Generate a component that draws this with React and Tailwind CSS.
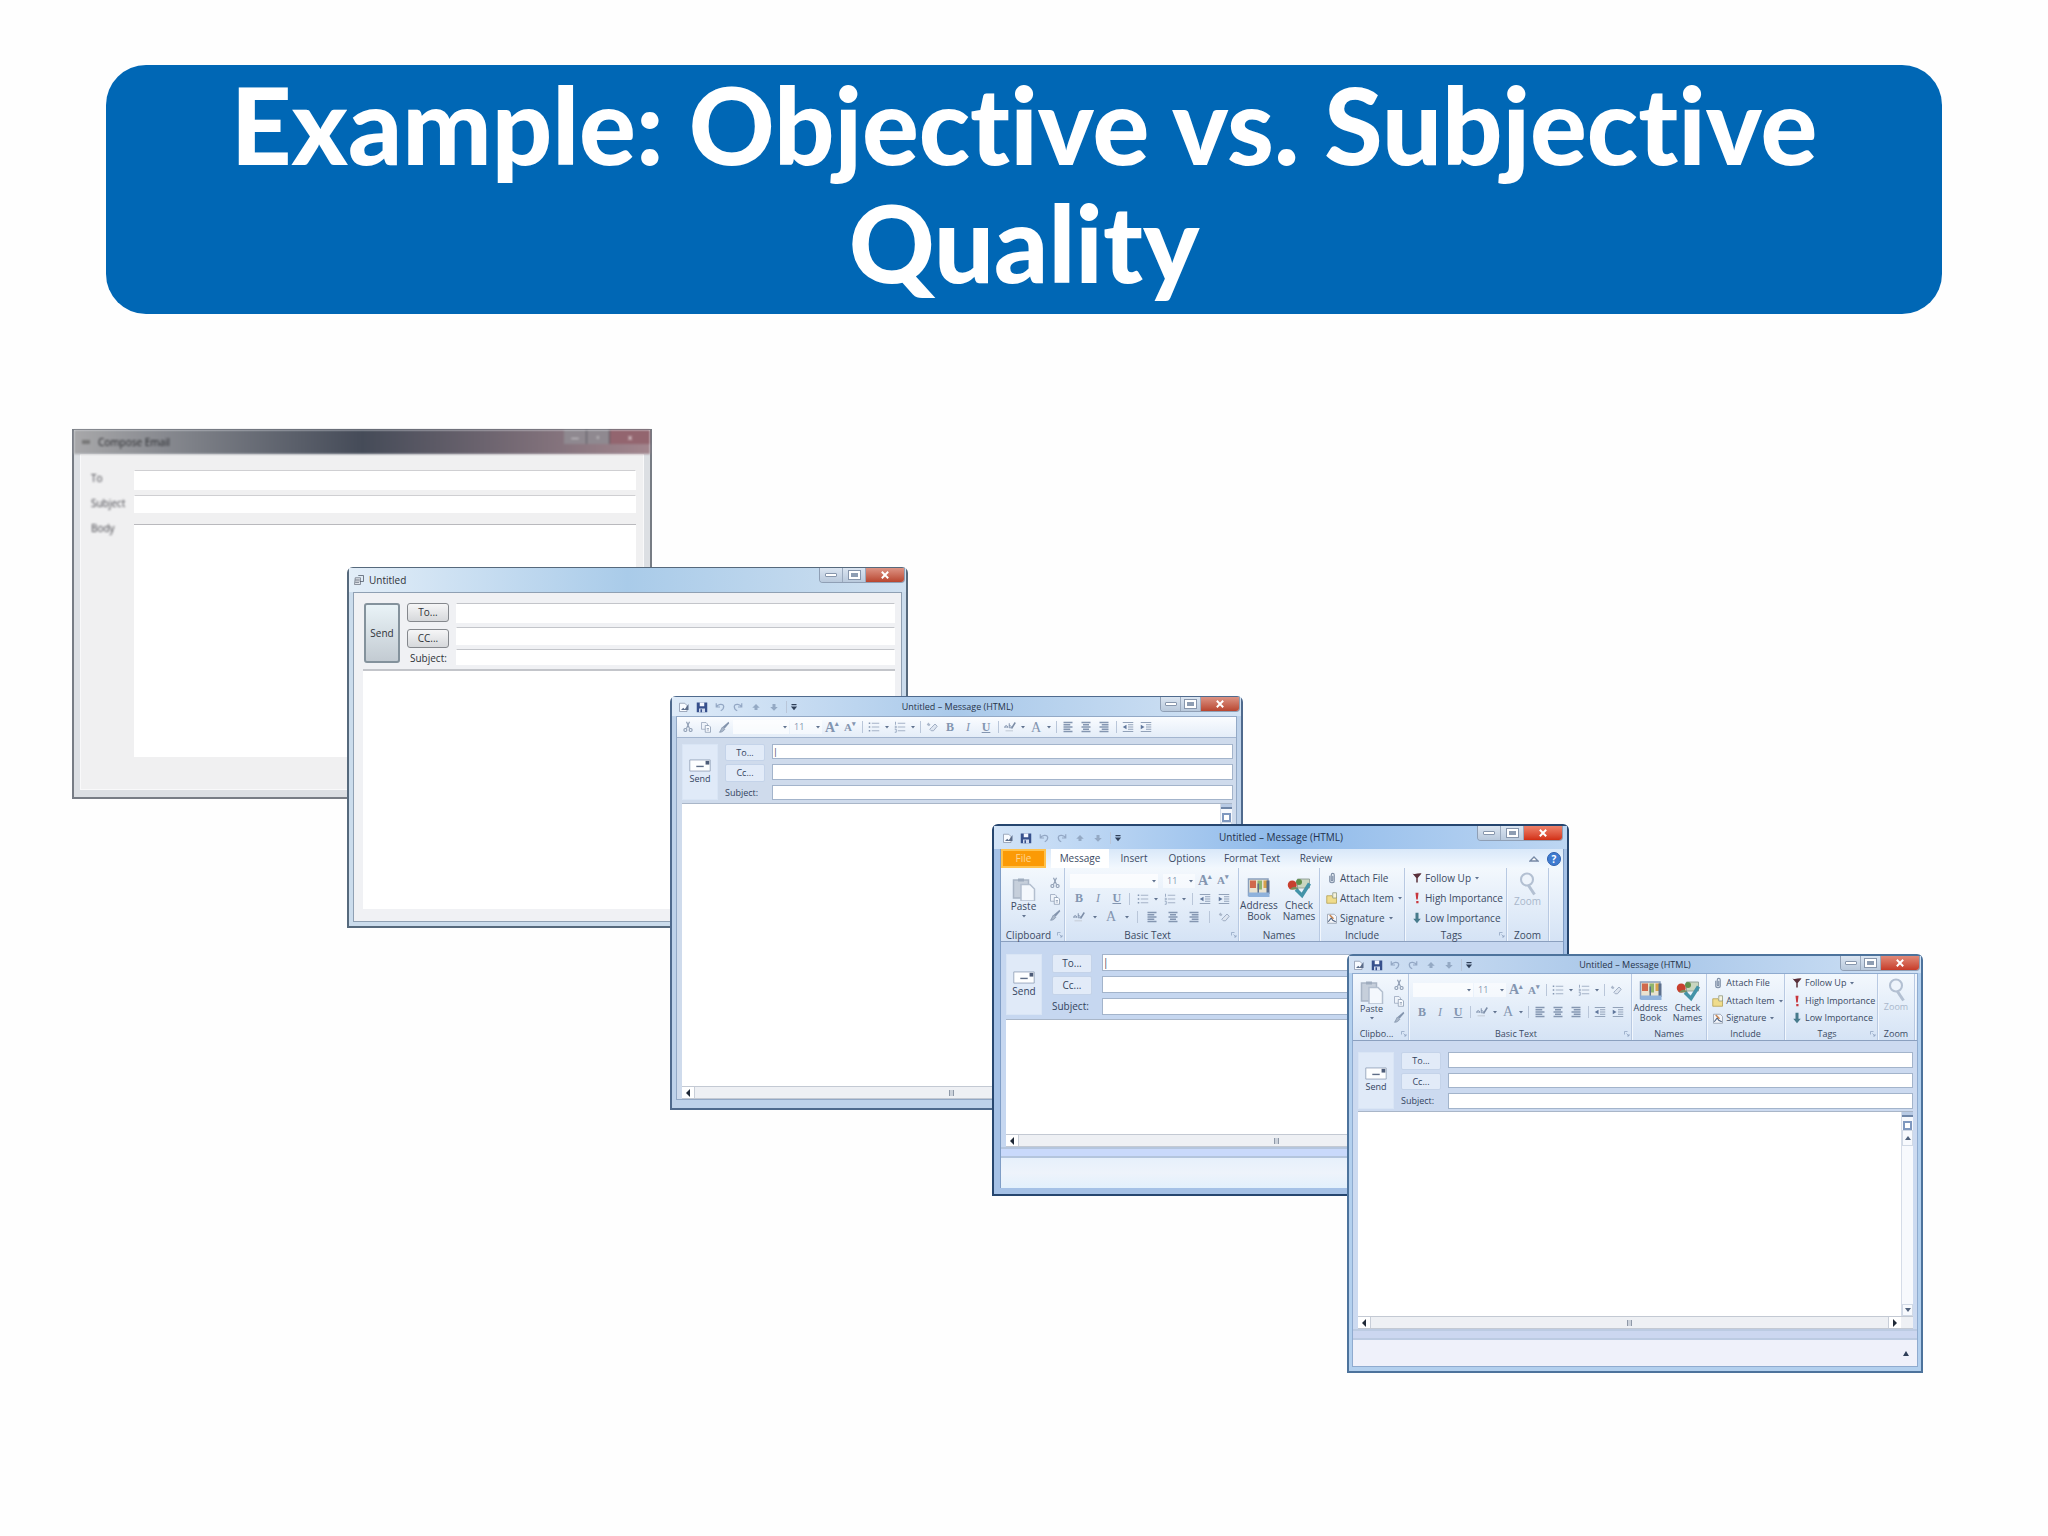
import React from 'react'
import clsx from 'clsx'

// Small drawings used on the title bars and toolbars, all on a 16x16 grid
const glyphs = {
  mail: (
    <>
      <path d="M2 3h7l3 3v8H2z" fill="#f8fbff" stroke="#8592a8" />
      <path d="M4 12l3-3 2 2 5-7v8z" fill="#5c6d8a" />
    </>
  ),
  form: (
    <>
      <path d="M3 5h7v9H2z" fill="#dfe3ea" stroke="#6c7480" />
      <path d="M7 2h7v8H9M3 8h6M3 11h5" fill="none" stroke="#4c5664" />
    </>
  ),
  save: (
    <>
      <path d="M1 2h14v13H1z" fill="#37508c" />
      <path d="M5 2h6v5H5z" fill="#f4f7ff" />
      <path d="M4 10h8v5H4z" fill="#cfd9ee" />
      <path d="M6 11h2v4H6z" fill="#37508c" />
    </>
  ),
  undo: <path d="M3 3v5h5M3 8c2-4 9-5 10-1 0 3-2 5-4 6" fill="none" stroke="#93a7c4" strokeWidth="1.6" />,
  redo: <path d="M13 3v5H8M13 8C11 4 4 3 3 7c0 3 1 5 4 6" fill="none" stroke="#93a7c4" strokeWidth="1.6" />,
  up: <path d="M8 4l5 5h-3v3H6V9H3z" fill="#94a9c4" />,
  down: <path d="M8 13l5-5h-3V4H6v4H3z" fill="#94a9c4" />,
  more: <path d="M4 3h8v2H4zM3 7h10l-5 6z" fill="#2f3f58" />,
  cut: (
    <>
      <path d="M6 1l4 9M10 1L6 10" stroke="#8d9cb2" strokeWidth="1.5" />
      <circle cx="4.500" cy="12" r="2" fill="none" stroke="#8d9cb2" strokeWidth="1.5" />
      <circle cx="11.500" cy="12" r="2" fill="none" stroke="#8d9cb2" strokeWidth="1.5" />
    </>
  ),
  copy: (
    <>
      <path d="M2 2h6l2 2v7H2z" fill="#eef3fa" stroke="#94a2b8" />
      <path d="M7 6h5l2 2v7H7z" fill="#f8fbff" stroke="#8695ac" />
      <path d="M9 10h3M9 12h3" stroke="#8695ac" />
    </>
  ),
  brush: (
    <>
      <path d="M14 1l1 2-6 7-3-2z" fill="#8394ad" />
      <path d="M6 8l3 3c-2 3-4 4-7 4 2-2 2-5 4-7z" fill="#a9b6c8" stroke="#7f90a8" />
    </>
  ),
  bullets: (
    <>
      <path d="M1 2h2v2H1zM1 7h2v2H1zM1 12h2v2H1z" fill="#8496b1" />
      <path d="M5 3h10M5 8h10M5 13h10" stroke="#a5b3c8" strokeWidth="1.5" />
    </>
  ),
  numbers: (
    <>
      <path d="M2 1v4M1 7h2v2H1M1 11h2v4H1" fill="none" stroke="#8496b1" />
      <path d="M5 3h10M5 8h10M5 13h10" stroke="#a5b3c8" strokeWidth="1.5" />
    </>
  ),
  outdent: (
    <>
      <path d="M1 2h14M8 5h7M8 8h7M8 11h7M1 14h14" stroke="#8f9fb7" strokeWidth="1.3" />
      <path d="M6 5v6L1 8z" fill="#60779c" />
    </>
  ),
  indent: (
    <>
      <path d="M1 2h14M8 5h7M8 8h7M8 11h7M1 14h14" stroke="#8f9fb7" strokeWidth="1.3" />
      <path d="M1 5v6l5-3z" fill="#60779c" />
    </>
  ),
  left: <path d="M2 2h12M2 5h9M2 8h12M2 11h9M2 14h12" stroke="#8496b1" strokeWidth="1.8" />,
  center: <path d="M2 2h12M4 5h8M2 8h12M4 11h8M2 14h12" stroke="#8496b1" strokeWidth="1.8" />,
  right: <path d="M2 2h12M5 5h9M2 8h12M5 11h9M2 14h12" stroke="#8496b1" strokeWidth="1.8" />,
  eraser: (
    <>
      <path d="M1 5l2-3 3 3-2 2z" fill="#aab7ca" />
      <path d="M7 9l5-5 3 3-5 6H7l-2-2z" fill="#dde5f0" stroke="#8b9bb4" />
    </>
  ),
  highlight: (
    <>
      <path d="M1 9c0-4 4-4 4 0M1 8h4M7 3v6c3 1 4-3 0-3" fill="none" stroke="#8293ad" strokeWidth="1.3" />
      <path d="M15 2l-5 8" stroke="#7b8ca6" strokeWidth="2" />
      <path d="M2 13h10" stroke="#cdd5e0" strokeWidth="2" />
    </>
  ),
  paste: (
    <>
      <path d="M1 2h10v12H1z" fill="#c6cfdb" stroke="#a9b5c5" />
      <path d="M4 1h4v2H4z" fill="#9facbe" />
      <path d="M6 5h6l3 3v8H6z" fill="#f4f8fd" stroke="#b3bfcf" />
    </>
  ),
  book: (
    <>
      <path d="M1 2h13v11H1z" fill="#e9e2cf" stroke="#8aa0bd" />
      <path d="M2 3h4v5H2z" fill="#d0694c" />
      <path d="M7 3h3v6H7z" fill="#8fb56c" />
      <path d="M11 3h3v5h-3z" fill="#d8a24a" />
      <path d="M7 5h1v7H7zM13 3h2v9h-2z" fill="#5c6f8c" />
      <path d="M1 11h14v3H1z" fill="#8fb2dc" />
    </>
  ),
  check: (
    <>
      <path d="M7 2h8v6H7z" fill="#c9d6c0" stroke="#8d9c94" strokeWidth=".6" />
      <circle cx="3.500" cy="6" r="3" fill="#c8402f" />
      <circle cx="8" cy="4" r="2" fill="#5f8f4d" />
      <path d="M2 9c2-3 5-2 6 0z" fill="#7a8d5c" />
      <path d="M6 9l4 4 5-8" fill="none" stroke="#4393a8" strokeWidth="2.4" />
    </>
  ),
  clip: <path d="M5 5v7c0 3 6 3 6 0V4c0-3-4-3-4 0v7c0 1 2 1 2 0V5" fill="none" stroke="#7e8ea5" strokeWidth="1.5" />,
  item: (
    <>
      <path d="M1 5h7l2 2h4v8H1z" fill="#efdc8c" stroke="#b29c4b" />
      <path d="M9 1h5v7H9z" fill="#f6f3dd" stroke="#8c9479" />
    </>
  ),
  sign: (
    <>
      <path d="M2 3h9l3 3v9H2z" fill="#f4f6fa" stroke="#8d98a8" />
      <path d="M3 13l4-5 2 3 4 2" fill="none" stroke="#4e6384" strokeWidth="1.5" />
      <path d="M5 4l5 5" stroke="#c98550" strokeWidth="2" />
    </>
  ),
  flag: <path d="M2 2c4 2 8-1 12 0L9 8v6H7V8z" fill="#59303a" />,
  high: <path d="M6 1h4L9 10H7zM7 12h3v3H7z" fill="#c8373d" />,
  low: <path d="M6 1h4v8h3l-5 6-5-6h3z" fill="#477b8c" />,
  zoom: (
    <>
      <circle cx="8" cy="5" r="4" fill="#eef4fb" stroke="#b3c0d2" strokeWidth="1.4" />
      <path d="M9 9l4 6" stroke="#b3c0d2" strokeWidth="2" />
    </>
  ),
  launch: <path d="M3 9V3h6M7 7l5 5M12 8v4H8" fill="none" stroke="#8ea2bf" strokeWidth="1.5" />,
  caret: <path d="M4 6h8l-4 5z" fill="#60728f" />,
}

const Icon = ({ name, className = 'size-3' }) => (
  <svg viewBox="0 0 16 16" className={clsx('shrink-0', className)} aria-hidden="true">
    {glyphs[name]}
  </svg>
)

const Tool = ({ name, label }) => (
  <button type="button" aria-label={label || name} className="flex h-4 w-[18px] shrink-0 items-center justify-center">
    <Icon name={name} />
  </button>
)

const Letter = ({ children, label, className }) => (
  <button
    type="button"
    aria-label={label}
    className={clsx('flex h-4 w-[18px] shrink-0 items-center justify-center font-["Liberation_Serif",serif] text-[#8395b0]', className)}
  >
    {children}
  </button>
)

const Caret = () => <Icon name="caret" className="size-2" />

const Rule = () => (
  <span className="flex w-[6px] shrink-0 justify-center">
    <span className="h-3 w-px bg-[#b9c6d9]" />
  </span>
)

const Grow = () => (
  <>
    <Letter label="Grow font" className="text-[14px] font-bold">A<sup className="text-[7px]">▴</sup></Letter>
    <Letter label="Shrink font" className="text-[11px] font-bold">A<sup className="text-[7px]">▾</sup></Letter>
  </>
)

const BoldItalic = () => (
  <>
    <Letter label="Bold" className="text-[12px] font-bold">B</Letter>
    <Letter label="Italic" className="text-[12px] italic">I</Letter>
    <Letter label="Underline" className="text-[12px] font-bold underline">U</Letter>
  </>
)

const Lists = () => (
  <>
    <Tool name="bullets" />
    <Caret />
    <Tool name="numbers" />
    <Caret />
  </>
)

const Colors = () => (
  <>
    <Tool name="highlight" />
    <Caret />
    <Letter label="Font color" className="text-[14px]">A</Letter>
    <Caret />
  </>
)

const Aligns = () => (
  <>
    <Tool name="left" label="Align left" />
    <Tool name="center" label="Center" />
    <Tool name="right" label="Align right" />
  </>
)

const Indents = () => (
  <>
    <Tool name="outdent" />
    <Tool name="indent" />
  </>
)

const FontPickers = ({ className }) => (
  <>
    <span className={clsx('flex h-[14px] shrink-0 items-center bg-white/70', className)}>
      <select aria-label="Font" className="h-full min-w-0 flex-1 appearance-none">
        <option></option>
      </select>
      <Caret />
    </span>
    <span className="mx-px flex h-[14px] w-8 shrink-0 items-center bg-white/50">
      <select aria-label="Font size" className="h-full min-w-0 flex-1 appearance-none pl-1 text-[9px] leading-[14px] text-[#8495ae]">
        <option>11</option>
      </select>
      <Caret />
    </span>
  </>
)

const Controls = ({ closeColor = 'from-[#dc9384] to-[#b8452f]', width = 'w-[86px]' }) => (
  <div className={clsx('flex h-[15px] shrink-0 self-start overflow-hidden rounded-b-[4px] border border-t-0 border-[#8f9fb5]', width)}>
    <button type="button" aria-label="Minimize" className="flex flex-1 items-center justify-center border-r border-[#9aa9bd] bg-linear-to-b from-[#dbe5f1] to-[#b9c9dc]">
      <span className="h-1 w-3 rounded-[1px] border border-[#8796ac] bg-white" />
    </button>
    <button type="button" aria-label="Maximize" className="flex flex-1 items-center justify-center border-r border-[#9aa9bd] bg-linear-to-b from-[#dbe5f1] to-[#b9c9dc]">
      <span className="h-2 w-[11px] border-2 border-white bg-[#8e9db2] outline outline-[#8796ac]" />
    </button>
    <button type="button" aria-label="Close" className={clsx('flex w-[38px] items-center justify-center bg-linear-to-b text-white', closeColor)}>
      <svg viewBox="0 0 10 10" className="size-2" aria-hidden="true">
        <path d="M1 1l8 8M9 1L1 9" stroke="currentColor" strokeWidth="2.4" />
      </svg>
    </button>
  </div>
)

const QuickAccess = () => (
  <div className="flex items-center">
    <Tool name="mail" />
    <Tool name="save" />
    <Tool name="undo" />
    <Tool name="redo" />
    <Tool name="up" label="Previous" />
    <Tool name="down" label="Next" />
    <Rule />
    <Icon name="more" className="size-[10px]" />
  </div>
)

const TitleBar = ({ title, className, ...controls }) => (
  <div className={clsx('flex shrink-0 items-center bg-linear-to-r', className)}>
    <div className="flex-1">
      <QuickAccess />
    </div>
    <h2>{title}</h2>
    <div className="flex flex-1 justify-end self-start">
      <Controls {...controls} />
    </div>
  </div>
)

const Field = ({ id, label, className, value = '' }) => (
  <input
    id={id}
    aria-label={label}
    defaultValue={value}
    className={clsx('block w-full border bg-white', className)}
  />
)

// Send button, recipient buttons and the three address lines
const Envelope = ({ id, cursor, className }) => (
  <div className={clsx('flex shrink-0 pl-[5px] text-[#33435e]', className)}>
    <button type="button" className="flex w-9 shrink-0 flex-col items-center justify-center border border-[#d9e5f5] bg-[#e0eaf8]">
      <svg viewBox="0 0 24 14" className="h-[13px] w-6" aria-hidden="true">
        <path d="M1 1h22v12H1z" fill="#fdfeff" stroke="#98a7bd" />
        <path d="M18 2h4v4h-4z" fill="#4d5c78" />
        <path d="M8 8h8" stroke="#5e6d87" strokeWidth="1.500" />
      </svg>
      Send
    </button>
    <div className="flex w-10 shrink-0 flex-col gap-[3px]">
      <button type="button" className="flex-1 rounded-xs border border-[#c4d3e9] bg-[#e2ebf8]">To...</button>
      <button type="button" className="flex-1 rounded-xs border border-[#c4d3e9] bg-[#e2ebf8]">Cc...</button>
      <label htmlFor={`${id}-subject`} className="flex flex-1 items-center">Subject:</label>
    </div>
    <div className="flex flex-1 flex-col gap-[5px]">
      <Field id={`${id}-to`} label="To" value={cursor ? '|' : ''} className="min-h-0 flex-1 border-[#a3b4cb]" />
      <Field id={`${id}-cc`} label="Cc" className="min-h-0 flex-1 border-[#a3b4cb]" />
      <Field id={`${id}-subject`} label="Subject" className="min-h-0 flex-1 border-[#a3b4cb]" />
    </div>
  </div>
)

const SideScroll = () => (
  <div className="flex w-3 shrink-0 flex-col items-center border-l border-[#d5dce8] bg-[#f7f9fd]">
    <span className="h-[5px] w-full border-b-2 border-[#6f86a8] bg-[#b8cae4]" />
    <span className="mt-1 size-[9px] border-2 border-[#7f98bf] bg-white" />
    <button type="button" aria-label="Scroll up" className="flex h-4 w-full items-center justify-center border border-[#d1d9e5]">
      <svg viewBox="0 0 6 4" className="w-[6px]" aria-hidden="true"><path d="M0 4h6L3 0z" fill="#50617c" /></svg>
    </button>
    <span className="flex-1" />
    <button type="button" aria-label="Scroll down" className="flex h-3 w-full items-center justify-center border border-[#d1d9e5]">
      <svg viewBox="0 0 6 4" className="w-[6px]" aria-hidden="true"><path d="M0 0h6L3 4z" fill="#50617c" /></svg>
    </button>
  </div>
)

const BottomScroll = () => (
  <div className="flex h-[13px] shrink-0 items-center border-y border-[#c3c9d3] bg-[#eef0f4] pr-3">
    <button type="button" aria-label="Scroll left" className="flex h-full w-[13px] items-center justify-center border-r border-[#c8ced8] bg-white">
      <svg viewBox="0 0 4 8" className="h-2" aria-hidden="true"><path d="M4 0v8L0 4z" fill="#1f2937" /></svg>
    </button>
    <span className="flex flex-1 justify-center">
      <span className="h-[6px] w-[5px] border-x border-[#8f99a8] bg-[#ccd2db]" />
    </span>
    <button type="button" aria-label="Scroll right" className="flex h-full w-[13px] items-center justify-center border-l border-[#c8ced8] bg-white">
      <svg viewBox="0 0 4 8" className="h-2" aria-hidden="true"><path d="M0 0v8l4-4z" fill="#1f2937" /></svg>
    </button>
  </div>
)

const Message = () => (
  <div className="mr-1 ml-[5px] flex min-h-0 flex-1 flex-col border-t border-[#a9b6c8] bg-white">
    <div className="flex min-h-0 flex-1">
      <textarea aria-label="Message" className="block flex-1 resize-none" />
      <SideScroll />
    </div>
    <BottomScroll />
  </div>
)

const Group = ({ name, launcher, className, children }) => (
  <section className={clsx('flex shrink-0 flex-col border-r border-[#b8c9e2] shadow-[1px_0_0_#f2f7fd]', className)}>
    <div className="flex min-h-0 flex-1 items-center justify-center">{children}</div>
    <div className="flex h-3 items-center">
      <h3 className="flex-1 text-center">{name}</h3>
      {launcher && <Icon name="launch" className="size-2" />}
    </div>
  </section>
)

const BigButton = ({ icon, lines, caret, className }) => (
  <button type="button" className={clsx('flex flex-col items-center', className)}>
    <Icon name={icon} className="size-6" />
    {lines.map((line) => (
      <span key={line}>{line}</span>
    ))}
    {caret && <Caret />}
  </button>
)

const Row = ({ icon, text, caret }) => (
  <button type="button" className="flex flex-1 items-center gap-[2px] whitespace-nowrap">
    <Icon name={icon} />
    {text}
    {caret && <Caret />}
  </button>
)

const Ribbon = ({ compact }) => (
  <div
    className={clsx(
      'flex shrink-0 border-b border-[#8ba0bf] bg-linear-to-b from-[#f3f8fd] to-[#d5e3f5] text-[#3b4a63]',
      compact ? 'h-[67px] text-[9px] leading-[10px]' : 'h-[74px] text-[10px] leading-[11px]'
    )}
  >
    <Group name={compact ? 'Clipbo...' : 'Clipboard'} launcher className={compact ? 'w-14' : 'w-[64px]'}>
      <BigButton icon="paste" lines={['Paste']} caret className="flex-1" />
      <div className="flex flex-col">
        <Tool name="cut" />
        <Tool name="copy" />
        <Tool name="brush" />
      </div>
    </Group>
    {compact ? (
      <Group name="Basic Text" launcher className="w-[223px]">
        <div className="flex flex-col gap-[6px]">
          <div className="flex items-center">
            <FontPickers className="w-[60px]" />
            <Grow />
            <Rule />
            <Lists />
            <Rule />
            <Tool name="eraser" />
          </div>
          <div className="flex items-center">
            <BoldItalic />
            <Rule />
            <Colors />
            <Rule />
            <Aligns />
            <Rule />
            <Indents />
          </div>
        </div>
      </Group>
    ) : (
      <Group name="Basic Text" launcher className="w-[174px]">
        <div className="flex flex-col gap-[2px]">
          <div className="flex items-center">
            <FontPickers className="mr-1 w-[88px]" />
            <Grow />
          </div>
          <div className="flex items-center justify-between">
            <BoldItalic />
            <Rule />
            <Lists />
            <Rule />
            <Indents />
          </div>
          <div className="flex items-center gap-[3px]">
            <Colors />
            <Rule />
            <Aligns />
            <Rule />
            <Tool name="eraser" />
          </div>
        </div>
      </Group>
    )}
    <Group name="Names" className={compact ? 'w-[75px]' : 'w-[81px]'}>
      <BigButton icon="book" lines={['Address', 'Book']} className="flex-1" />
      <BigButton icon="check" lines={['Check', 'Names']} className="flex-1" />
    </Group>
    <Group name="Include" className={compact ? 'w-[78px]' : 'w-[85px]'}>
      <div className="flex h-full flex-1 flex-col pb-px pl-[6px]">
        <Row icon="clip" text="Attach File" />
        <Row icon="item" text="Attach Item" caret />
        <Row icon="sign" text="Signature" caret />
      </div>
    </Group>
    <Group name="Tags" launcher className={compact ? 'w-[93px]' : 'w-[102px]'}>
      <div className="flex h-full flex-1 flex-col pb-px pl-[6px]">
        <Row icon="flag" text="Follow Up" caret />
        <Row icon="high" text="High Importance" />
        <Row icon="low" text="Low Importance" />
      </div>
    </Group>
    <Group name="Zoom" className={compact ? 'w-[37px]' : 'w-[42px]'}>
      <BigButton icon="zoom" lines={['Zoom']} className="h-full pt-1 text-[#a9b7cb]" />
    </Group>
  </div>
)

const ComposeEmail = () => (
  <section className="absolute top-[429px] left-[72px] flex h-[370px] w-[580px] flex-col border-2 border-t border-[#777c84] bg-[#dcdfe3] px-[6px] pb-[7px] text-[10px] text-[#3f3f46]">
    <div className="-mx-[6px] flex h-6 shrink-0 items-center justify-between bg-linear-to-r from-[#a8a8aa] via-[#454b58] to-[#a3868e] pl-2 blur-[1px]">
      <h2 className="flex items-center gap-2 text-[10px] text-[#26272b]">
        <span className="h-1 w-2 bg-[#777]" />
        Compose Email
      </h2>
      <div className="flex h-[14px] w-[86px] self-start bg-[#8f8990]">
        <button type="button" aria-label="Minimize" className="flex-1 border-r border-[#5d5a62] text-[8px] leading-3 text-white">—</button>
        <button type="button" aria-label="Maximize" className="flex-1 border-r border-[#5d5a62] text-[8px] leading-3 text-white">▫</button>
        <button type="button" aria-label="Close" className="w-10 bg-[#93656f] text-[8px] leading-3 text-white">x</button>
      </div>
    </div>
    <div className="flex min-h-0 flex-1 flex-col border border-[#f9f9fa] bg-[#f0f0f1] pt-[15px] pr-[7px] pb-8 pl-[10px]">
      <div className="flex h-[25px]">
        <label htmlFor="w1-to" className="w-[43px] leading-4 blur-[1px]">To</label>
        <Field id="w1-to" label="To" className="h-5 flex-1 border-transparent border-t-[#cfcfd2]" />
      </div>
      <div className="flex h-[29px]">
        <label htmlFor="w1-subject" className="w-[43px] leading-4 blur-[1px]">Subject</label>
        <Field id="w1-subject" label="Subject" className="h-[18px] flex-1 border-transparent border-t-[#cfcfd2]" />
      </div>
      <div className="flex min-h-0 flex-1">
        <label htmlFor="w1-body" className="w-[43px] leading-2 blur-[1px]">Body</label>
        <textarea id="w1-body" className="block flex-1 resize-none border-t border-[#b9b9bd] bg-white" />
      </div>
    </div>
  </section>
)

const PlainCompose = () => (
  <section className="absolute top-[567px] left-[347px] flex h-[361px] w-[561px] flex-col rounded-t-md border-2 border-t border-[#56697c] bg-[#cbdcec] px-1 pb-1 text-[10px] text-[#2f3237]">
    <div className="-mx-1 flex h-6 shrink-0 items-center justify-between bg-linear-to-r from-[#e3eef8] via-[#a9cbe9] to-[#cfe0f0] pr-px pl-1">
      <h2 className="flex items-center gap-1">
        <Icon name="form" />
        Untitled
      </h2>
      <Controls />
    </div>
    <div className="flex min-h-0 flex-1 flex-col border border-[#8fa0b3] bg-[#f0f1f4] pt-[10px] pr-[6px] pb-3 pl-[9px]">
      <div className="flex h-[66px] shrink-0 gap-[7px] pl-px">
        <button type="button" className="h-[60px] w-9 shrink-0 rounded-[3px] border-2 border-[#84929c] bg-linear-to-b from-[#e9f3f7] to-[#c3cbd2]">Send</button>
        <div className="flex w-[42px] shrink-0 flex-col">
          <button type="button" className="mb-[7px] h-[19px] rounded-[3px] border border-[#85888d] bg-linear-to-b from-[#f6f6f7] to-[#d6d8db]">To...</button>
          <button type="button" className="h-[19px] rounded-[3px] border border-[#85888d] bg-linear-to-b from-[#f6f6f7] to-[#d6d8db]">CC...</button>
          <label htmlFor="w2-subject" className="pl-[3px] leading-5">Subject:</label>
        </div>
        <div className="flex flex-1 flex-col gap-1">
          <Field id="w2-to" label="To" className="h-5 border-transparent border-t-[#c3c5ca]" />
          <Field id="w2-cc" label="CC" className="h-[18px] border-transparent border-t-[#c3c5ca]" />
          <Field id="w2-subject" label="Subject" className="h-4 border-transparent border-t-[#c3c5ca]" />
        </div>
      </div>
      <textarea aria-label="Message" className="block min-h-0 flex-1 resize-none border-t-2 border-[#c3c5ca] bg-white" />
    </div>
  </section>
)

const ToolbarCompose = () => (
  <section className="absolute top-[696px] left-[670px] flex h-[414px] w-[573px] flex-col rounded-t-md border-2 border-t border-[#4f6a8d] bg-[#bed2ea] px-1 pb-2 text-[9px]">
    <TitleBar
      title="Untitled – Message (HTML)"
      width="w-20"
      className="-mx-1 h-[19px] from-[#dfebf8] via-[#a9c9ea] to-[#d3e3f4] pr-px pl-[3px] text-[9px] text-[#27344a]"
    />
    <div className="flex min-h-0 flex-1 flex-col border border-[#93a9c6] bg-[#cfdbec]">
      <div className="flex h-[21px] shrink-0 items-center border-b border-[#a3b5cf] bg-linear-to-b from-[#fafcff] to-[#e4edf8] pl-[2px]">
        <Tool name="cut" />
        <Tool name="copy" />
        <Tool name="brush" />
        <FontPickers className="w-[56px]" />
        <Grow />
        <Rule />
        <Lists />
        <Rule />
        <Tool name="eraser" />
        <BoldItalic />
        <Rule />
        <Colors />
        <Rule />
        <Aligns />
        <Rule />
        <Indents />
      </div>
      <Envelope id="w3" cursor className="h-[65px] gap-[7px] pt-[6px] pr-[3px] pb-[3px]" />
      <Message />
    </div>
  </section>
)

const tabs = [
  { name: 'Insert', width: 'w-[50px]' },
  { name: 'Options', width: 'w-[56px]' },
  { name: 'Format Text', width: 'w-[74px]' },
  { name: 'Review', width: 'w-[54px]' },
]

const RibbonCompose = () => (
  <section className="absolute top-[824px] left-[992px] flex h-[372px] w-[577px] flex-col rounded-t-md border-2 border-[#26466f] bg-[#a5c1e6] pr-[3px] pb-[6px] pl-[6px] text-[10px]">
    <TitleBar
      title="Untitled – Message (HTML)"
      closeColor="from-[#ee8069] to-[#d22d12]"
      className="-mr-[3px] -ml-[6px] h-[23px] from-[#d3e4f7] via-[#8fbaea] to-[#bdd6f2] pr-1 pl-[5px] text-[10px] text-[#22304a]"
    />
    <div className="flex min-h-0 flex-1 flex-col border-x border-[#7f9dc6] bg-[#c6d7f0]">
      <nav className="flex h-[19px] shrink-0 items-center bg-linear-to-b from-[#d9e8f9] to-[#f2f8fe] text-[#3b4a63]">
        <button type="button" className="h-full w-[45px] border-2 border-[#ffc24d] bg-[#fb9a06] text-[#ffd590]">File</button>
        <button type="button" className="ml-[5px] h-full w-[58px] bg-white">Message</button>
        {tabs.map((tab) => (
          <button key={tab.name} type="button" className={clsx('h-full whitespace-nowrap', tab.width)}>{tab.name}</button>
        ))}
        <span className="ml-auto flex items-center gap-2 pr-[2px]">
          <svg viewBox="0 0 10 8" className="h-2 w-[10px]" aria-hidden="true">
            <path d="M1 6l4-4 4 4z" fill="#fff" stroke="#7588a5" strokeWidth="1.300" />
          </svg>
          <button type="button" aria-label="Help" className="size-[14px] rounded-full border border-[#2d5fae] bg-[#3f7bd0] text-[10px] leading-3 font-bold text-white">?</button>
        </span>
      </nav>
      <Ribbon />
      <Envelope id="w4" cursor className="h-[77px] gap-[10px] pt-3 pr-[3px] pb-1" />
      <Message />
      <div className="h-[11px] shrink-0 border-y-2 border-[#b4c5dd] bg-[#c9d9fb]" />
      <div className="h-[30px] shrink-0 bg-linear-to-b from-[#e6f0fb] via-[#eef3fb] to-[#e2f0fc]" />
    </div>
  </section>
)

const CompactCompose = () => (
  <section className="absolute top-[954px] left-[1347px] flex h-[419px] w-[576px] flex-col rounded-t-md border-2 border-[#4d739c] bg-[#b3d0ee] px-[3px] pb-1 text-[9px]">
    <TitleBar
      title="Untitled – Message (HTML)"
      closeColor="from-[#e08877] to-[#c63a28]"
      width="w-20"
      className="-mx-[3px] h-[17px] from-[#d3e2f4] via-[#a6c5e8] to-[#cfe1f5] px-px text-[9px] text-[#27344a]"
    />
    <div className="flex min-h-0 flex-1 flex-col border border-[#8fabcf] bg-[#ccdaf0]">
      <Ribbon compact />
      <Envelope id="w5" className="h-[70px] gap-[7px] pt-[11px] pr-1 pb-[2px]" />
      <Message />
      <div className="h-[11px] shrink-0 border-y-2 border-[#bccbe2] bg-[#ccd7f0]" />
      <div className="flex h-[26px] shrink-0 items-center justify-end bg-[#eff1fa] pr-2">
        <svg viewBox="0 0 6 5" className="w-[6px]" aria-hidden="true"><path d="M0 5h6L3 0z" fill="#2f3f58" /></svg>
      </div>
    </div>
  </section>
)

const App = () => {
  return (
    <main className='relative min-h-screen bg-[#fefefe] pt-[65px] font-["Open_Sans","Noto_Sans",sans-serif]'>
      <header className="mx-[106px] flex h-[249px] justify-center rounded-[40px] bg-[#0067b5]">
        <h1 className="max-w-[1700px] text-center font-[Lato,sans-serif] text-[106px] leading-[118px] font-black text-white [font-variant-ligatures:none]">
          Example: Objective vs. Subjective Quality
        </h1>
      </header>
      <ComposeEmail />
      <PlainCompose />
      <ToolbarCompose />
      <RibbonCompose />
      <CompactCompose />
    </main>
  )
}

export default App
